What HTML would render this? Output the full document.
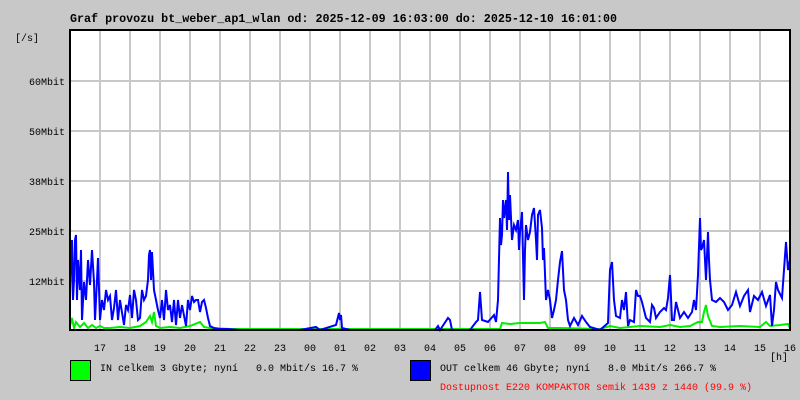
<!DOCTYPE html>
<html><head><meta charset="utf-8"><style>
html,body{margin:0;padding:0;background:#c8c8c8;width:800px;height:400px;overflow:hidden}
svg text{font-family:"Liberation Mono",monospace;font-size:10px;white-space:pre}
</style></head><body>
<svg width="800" height="400" xmlns="http://www.w3.org/2000/svg" xml:space="preserve">
<rect x="0" y="0" width="800" height="400" fill="#c8c8c8"/>
<rect x="70" y="30" width="720" height="300" fill="#fff"/>
<g stroke="#c8c8c8" stroke-width="2">
<path d="M100 30V330M130 30V330M160 30V330M190 30V330M220 30V330M250 30V330M280 30V330M310 30V330M340 30V330M370 30V330M400 30V330M430 30V330M460 30V330M490 30V330M520 30V330M550 30V330M580 30V330M610 30V330M640 30V330M670 30V330M700 30V330M730 30V330M760 30V330"/>
<path d="M70 81H790M70 131H790M70 181H790M70 231H790M70 281H790"/>
</g>
<polyline fill="none" stroke="#00ee00" stroke-width="2" points="70,326 72,318 74,328 76,322 80,327 84,323 88,328 92,325 96,328 100,326 104,328 110,328 120,327 130,328 140,326 146,322 150,316 152,322 154,312 156,326 160,328 170,327 180,328 190,326 200,322 204,327 210,328 230,329 300,329 500,329 502,323 510,324 520,323 530,323 540,323 545,322 548,328 560,328 600,329 610,326 620,328 640,326 660,327 670,325 680,327 690,326 698,322 702,322 704,312 706,305 708,316 712,326 720,327 740,326 760,327 766,322 770,326 780,325 788,324 790,328"/>
<polyline fill="none" stroke="#0000ff" stroke-width="2" points="70,300 71,250 72,240 73,300 74,280 75,240 76,235 77,300 78,260 80,290 81,250 82,320 84,282 86,300 88,260 90,285 92,250 94,282 95,320 96,300 97,280 98,258 100,320 102,300 104,310 106,290 108,300 110,296 112,320 114,308 116,290 118,320 120,300 124,325 126,305 128,310 130,295 132,318 134,290 136,300 138,320 140,318 142,290 144,300 146,296 148,280 149,255 150,250 151,280 152,252 154,290 156,300 158,310 160,318 162,300 164,320 166,290 168,310 170,305 172,322 174,300 176,325 178,300 180,318 182,305 186,326 188,300 190,310 192,296 194,302 196,300 198,300 200,312 202,302 204,300 206,308 208,318 210,326 214,328 220,329 228,329 240,330 300,330 316,327 320,330 336,325 339,313 340,320 341,315 342,328 350,330 435,330 438,326 440,330 448,318 450,320 452,330 470,330 476,322 478,320 480,292 482,320 488,322 494,315 496,322 498,300 500,218 501,245 502,235 503,200 504,218 506,200 507,230 508,172 509,220 510,195 512,240 514,225 516,230 518,220 519,250 520,232 522,212 524,300 525,250 526,225 528,240 530,232 532,215 534,208 536,240 537,260 538,215 540,210 542,228 543,260 544,248 546,300 548,290 550,300 552,318 554,310 556,300 558,280 560,262 562,251 564,290 566,300 568,320 570,326 574,318 578,325 582,316 586,322 590,327 600,330 608,323 610,270 612,262 614,300 616,316 620,318 622,300 624,310 626,292 628,326 630,320 634,322 636,290 638,296 640,296 642,302 644,310 646,318 650,322 652,305 654,308 656,318 660,312 664,308 666,310 668,298 670,275 672,320 674,320 676,302 680,318 684,312 688,318 692,312 694,300 696,310 698,275 700,218 701,250 702,248 704,240 706,280 708,232 709,260 710,280 712,300 716,302 720,298 724,302 728,310 732,305 736,292 740,306 744,296 748,290 750,312 754,296 758,300 762,292 766,306 770,295 772,326 774,310 776,282 778,290 782,298 784,270 786,242 788,270 790,260"/>
<rect x="70" y="30" width="720" height="300" fill="none" stroke="#000" stroke-width="2"/>
<text x="70" y="22" font-weight="bold" style="font-size:11.7px">Graf provozu bt_weber_ap1_wlan od: 2025-12-09 16:03:00 do: 2025-12-10 16:01:00</text>
<text x="15" y="41">[/s]</text>
<g text-anchor="end">
<text x="65" y="85">60Mbit</text><text x="65" y="135">50Mbit</text><text x="65" y="185">38Mbit</text><text x="65" y="235">25Mbit</text><text x="65" y="285">12Mbit</text>
</g>
<g text-anchor="middle">
<text x="100" y="351">17</text><text x="130" y="351">18</text><text x="160" y="351">19</text><text x="190" y="351">20</text><text x="220" y="351">21</text><text x="250" y="351">22</text><text x="280" y="351">23</text><text x="310" y="351">00</text><text x="340" y="351">01</text><text x="370" y="351">02</text><text x="400" y="351">03</text><text x="430" y="351">04</text><text x="460" y="351">05</text><text x="490" y="351">06</text><text x="520" y="351">07</text><text x="550" y="351">08</text><text x="580" y="351">09</text><text x="610" y="351">10</text><text x="640" y="351">11</text><text x="670" y="351">12</text><text x="700" y="351">13</text><text x="730" y="351">14</text><text x="760" y="351">15</text><text x="790" y="351">16</text>
</g>
<text x="770" y="360">[h]</text>
<rect x="70.5" y="360.5" width="20" height="20" fill="#00ff00" stroke="#000"/>
<text x="100" y="371">IN celkem 3 Gbyte; nyní   0.0 Mbit/s 16.7 %</text>
<rect x="410.5" y="360.5" width="20" height="20" fill="#0000ff" stroke="#000"/>
<text x="440" y="371">OUT celkem 46 Gbyte; nyní   8.0 Mbit/s 266.7 %</text>
<text x="440" y="390" fill="#ff0000">Dostupnost E220 KOMPAKTOR semik 1439 z 1440 (99.9 %)</text>
</svg>
</body></html>
